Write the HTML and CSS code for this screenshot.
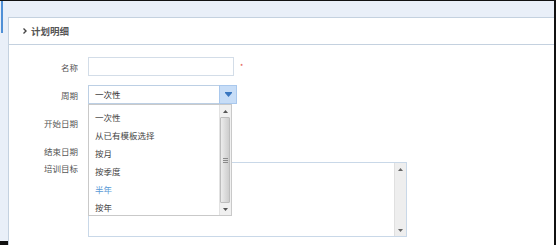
FILE: index.html
```html
<!DOCTYPE html>
<html lang="zh-CN">
<head>
  <meta charset="UTF-8" />
  <title>计划明细</title>
  <link rel="stylesheet" href="styles.css">
</head>
<body>

  <div class="screen">
    <div class="rail"><span class="rail-mark"></span></div>

    <div class="workspace">
      <section class="panel">
        <h2 class="panel-title">
          <svg class="chevron" width="4" height="6" viewBox="0 0 4 6">
            <polyline points="0.5,0.5 3,3 0.5,5.5" fill="none" stroke="#444" stroke-width="1.4" />
          </svg>
          计划明细
        </h2>

        <form class="plan-form">
          <div class="row">
            <label class="label">名称</label>
            <input class="field field-name" type="text" />
            <span class="required">*</span>
          </div>

          <div class="row">
            <label class="label">周期</label>
            <div class="select">
              <span class="select-value">一次性</span>
              <span class="select-btn">
                <svg width="7" height="5" viewBox="0 0 7 5">
                  <polygon points="0,0 7,0 7,1 3.5,5 0,1" fill="#3a77c0" />
                </svg>
              </span>

              <div class="options">
                <ul class="option-list">
                  <li>一次性</li>
                  <li>从已有模板选择</li>
                  <li>按月</li>
                  <li>按季度</li>
                  <li class="hover">半年</li>
                  <li>按年</li>
                </ul>
                <div class="scrollbar">
                  <span class="scroll-arrow">
                    <svg width="5" height="3" viewBox="0 0 5 3"><polygon points="2.5,0 5,3 0,3" fill="#555" /></svg>
                  </span>
                  <span class="scroll-thumb"><span class="grip"></span></span>
                  <span class="scroll-track"></span>
                  <span class="scroll-arrow">
                    <svg width="5" height="3" viewBox="0 0 5 3"><polygon points="0,0 5,0 2.5,3" fill="#555" /></svg>
                  </span>
                </div>
              </div>
            </div>
          </div>

          <div class="row">
            <label class="label">开始日期</label>
            <input class="field field-date" type="text" />
          </div>

          <div class="row row-end">
            <label class="label">结束日期</label>
            <input class="field field-date" type="text" />
          </div>

          <div class="row row-tall">
            <label class="label">培训目标</label>
            <div class="textarea">
              <div class="textarea-body"></div>
              <div class="scrollbar scrollbar-plain">
                <span class="scroll-arrow">
                  <svg width="5" height="3" viewBox="0 0 5 3"><polygon points="2.5,0 5,3 0,3" fill="#666" /></svg>
                </span>
                <span class="scroll-track"></span>
                <span class="scroll-arrow">
                  <svg width="5" height="3" viewBox="0 0 5 3"><polygon points="0,0 5,0 2.5,3" fill="#666" /></svg>
                </span>
              </div>
            </div>
          </div>
        </form>
      </section>
    </div>
  </div>

</body>
</html>
```

FILE: styles.css
```css
* {
  box-sizing: border-box;
}

html, body {
  margin: 0;
}

body {
  font-family: "Noto Sans CJK SC", "Noto Sans", sans-serif;
  font-size: 8.5px;
  color: #555;
}

.screen {
  width: 556px;
  height: 245px;
  display: flex;
  background: #e9eff8;
  border-style: solid;
  border-color: #111;
  border-width: 1px 2px 4px 0;
}

.rail {
  width: 8px;
  flex: none;
}

.rail-mark {
  display: block;
  width: 2px;
  height: 32px;
  margin-left: 1px;
  background: #4f8fd6;
}

.workspace {
  flex: 1;
  padding-top: 16px;
  display: flex;
  flex-direction: column;
}

.panel {
  flex: 1;
  background: #fff;
  border-top: 1px solid #c4d1df;
  border-left: 1px solid #c4d1df;
}

.panel-title {
  margin: 0;
  height: 27px;
  border-bottom: 1px solid #c4d1df;
  display: flex;
  align-items: center;
  gap: 4px;
  padding-left: 14px;
  font-size: 9.5px;
  font-weight: bold;
  color: #555;
}

.plan-form {
  padding-top: 12px;
}

.row {
  display: flex;
  align-items: center;
  height: 19px;
  margin-bottom: 9px;
}

.row-end {
  margin-bottom: 2px;
}

.row-tall {
  height: auto;
  align-items: flex-start;
}

.label {
  flex: none;
  width: 69px;
  margin-right: 10px;
  text-align: right;
  line-height: 12px;
  color: #555;
}

.field {
  height: 19px;
  border: 1px solid #d3dde8;
  background: #fff;
  padding: 0 6px;
  font: inherit;
  outline: none;
}

.field-name {
  width: 146px;
}

.field-date {
  width: 140px;
}

.required {
  margin-left: 6px;
  color: #e24a3b;
  font-size: 7px;
  line-height: 7px;
}

.select {
  position: relative;
  width: 149px;
  height: 19px;
  display: flex;
  border: 1px solid #bccfe4;
  background: #fff;
}

.select-value {
  flex: 1;
  padding-left: 6px;
  line-height: 17px;
  color: #333;
}

.select-btn {
  width: 18px;
  margin: -1px -1px -1px 0;
  display: flex;
  align-items: center;
  justify-content: center;
  background: #c7ddf7;
  border: 1px solid #a9c8ed;
}

.options {
  position: absolute;
  left: -1px;
  top: calc(100% + 1px);
  z-index: 2;
  width: 144px;
  height: 112px;
  display: flex;
  background: #fff;
  border: 1px solid #c9c9c9;
}

.option-list {
  flex: 1;
  margin: 0;
  padding: 3px 0 0;
  list-style: none;
  overflow: hidden;
}

.option-list li {
  height: 18px;
  line-height: 18px;
  padding-left: 6px;
  color: #444;
  white-space: nowrap;
}

.option-list li.hover {
  color: #5b9ad6;
}

.scrollbar {
  width: 12px;
  flex: none;
  display: flex;
  flex-direction: column;
  background: #f0f0f0;
  border-left: 1px solid #e2e2e2;
}

.scroll-arrow {
  height: 12px;
  flex: none;
  display: flex;
  align-items: center;
  justify-content: center;
}

.scroll-thumb {
  height: 86px;
  flex: none;
  display: flex;
  align-items: center;
  justify-content: center;
  margin: 0 1px 0 0;
  border: 1px solid #bdbdbd;
  border-radius: 1px;
  background: linear-gradient(to right, #ececec, #cdcdcd);
}

.grip {
  width: 5px;
  height: 5px;
  background: repeating-linear-gradient(#8a8a8a 0 1px, transparent 1px 2px);
}

.scroll-track {
  flex: 1;
}

.textarea {
  width: 319px;
  height: 75px;
  display: flex;
  border: 1px solid #c9d8e8;
  background: #fff;
}

.textarea-body {
  flex: 1;
}

.scrollbar-plain {
  background: #eeeeee;
  border-left: 1px solid #e0e0e0;
}
```
